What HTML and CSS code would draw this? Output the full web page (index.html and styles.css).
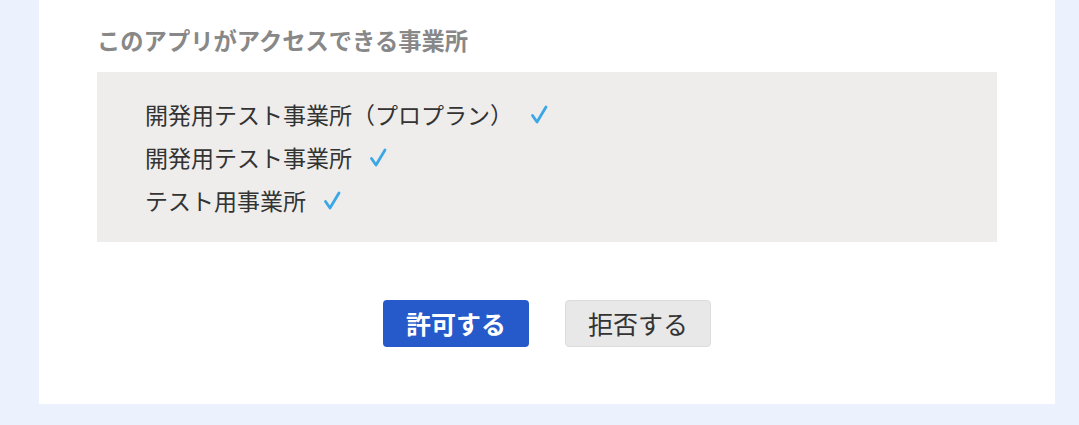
FILE: index.html
```html
<!DOCTYPE html>
<html lang="ja">
<head>
<meta charset="utf-8">
<link rel="stylesheet" href="styles.css">
</head>
<body>
<div class="page">
  <div class="card">
    <h2 class="heading">このアプリがアクセスできる事業所</h2>
    <ul class="offices">
      <li class="office">開発用テスト事業所（プロプラン）<svg class="check" viewBox="0 0 18 20" width="18" height="20"><path d="M2.5 11.5 L7 18 L16 3" fill="none" stroke="#3ba7e6" stroke-width="2.8" stroke-linecap="round" stroke-linejoin="round"/></svg></li>
      <li class="office">開発用テスト事業所<svg class="check" viewBox="0 0 18 20" width="18" height="20"><path d="M2.5 11.5 L7 18 L16 3" fill="none" stroke="#3ba7e6" stroke-width="2.8" stroke-linecap="round" stroke-linejoin="round"/></svg></li>
      <li class="office">テスト用事業所<svg class="check" viewBox="0 0 18 20" width="18" height="20"><path d="M2.5 11.5 L7 18 L16 3" fill="none" stroke="#3ba7e6" stroke-width="2.8" stroke-linecap="round" stroke-linejoin="round"/></svg></li>
    </ul>
    <div class="actions">
      <button class="btn btn-allow">許可する</button>
      <button class="btn btn-deny">拒否する</button>
    </div>
  </div>
</div>
</body>
</html>
```
FILE: styles.css
```css
html, body {
  margin: 0;
  padding: 0;
  background: #ebf2fd;
}
body {
  font-family: "Noto Sans CJK JP", "Noto Sans", sans-serif;
  color: #333;
}
.page {
  padding: 0 24px 21px 39px;
}
.card {
  background: #fff;
  padding: 23px 58px 57px;
}
.heading {
  margin: 0 0 15px;
  font-size: 23.3px;
  line-height: 34px;
  font-weight: 700;
  color: #888;
}
.offices {
  list-style: none;
  margin: 0;
  padding: 21px 48px 20px;
  background: #eeedeb;
}
.office {
  display: flex;
  align-items: center;
  font-size: 23px;
  line-height: 43px;
  color: #333;
}
.check {
  margin-left: 17px;
  margin-top: -2px;
}
.actions {
  display: flex;
  justify-content: center;
  gap: 36px;
  margin-top: 58px;
}
.btn {
  width: 146px;
  height: 47px;
  border-radius: 4px;
  font-family: "Noto Sans CJK JP", sans-serif;
  font-size: 25px;
  line-height: 1;
  padding: 0;
  cursor: pointer;
}
.btn-allow {
  background: #2659c9;
  border: none;
  color: #fff;
  font-weight: 700;
}
.btn-deny {
  background: #e8e8e8;
  border: 1px solid #dcdcdc;
  color: #333;
}
```
